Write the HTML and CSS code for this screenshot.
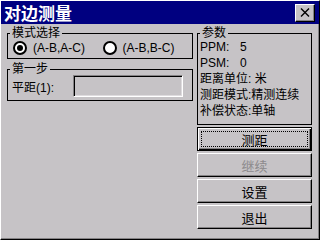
FILE: index.html
```html
<!DOCTYPE html>
<html lang="zh">
<head>
    <meta charset="UTF-8">
    <title>对边测量</title>
    <link rel="stylesheet" href="styles.css">
</head>
<body>
    <div class="dialog">
        <div class="titlebar">
            <span class="title">对边测量</span>
            <span class="close">
                <svg width="10" height="9" viewBox="0 0 10 9"><path d="M1 0.5 L9 8.5 M9 0.5 L1 8.5" stroke="#000" stroke-width="1.4"/></svg>
            </span>
        </div>

        <div class="content">
            <div class="left">
                <fieldset class="group">
                    <legend>模式选择</legend>
                    <div class="radios">
                        <span class="radio"><span class="dot checked"></span>(A-B,A-C)</span>
                        <span class="radio"><span class="dot"></span>(A-B,B-C)</span>
                    </div>
                </fieldset>

                <fieldset class="group step">
                    <legend>第一步</legend>
                    <div class="field-row">
                        <span class="field-label">平距(1):</span>
                        <span class="field"></span>
                    </div>
                </fieldset>
            </div>

            <div class="right">
                <fieldset class="group params">
                    <legend>参数</legend>
                    <div class="lines">
                        <div><span class="key">PPM:</span>5</div>
                        <div><span class="key">PSM:</span>0</div>
                        <div>距离单位: 米</div>
                        <div>测距模式:精测连续</div>
                        <div>补偿状态:单轴</div>
                    </div>
                </fieldset>

                <div class="buttons">
                    <div class="btn focused"><span class="focus">测距</span></div>
                    <div class="btn disabled"><span>继续</span></div>
                    <div class="btn"><span>设置</span></div>
                    <div class="btn"><span>退出</span></div>
                </div>
            </div>
        </div>
    </div>
</body>
</html>
```

FILE: styles.css
```css
body { margin: 0; font-family: "Liberation Sans", "Noto Sans CJK SC", sans-serif; font-size: 12px; color: #000; background: #c6c3c6; }

.dialog { width: 320px; height: 240px; box-sizing: border-box; background: #c6c3c6; border: 1px solid; border-color: #fff #000 #000 #fff; box-shadow: inset -1px -1px #848284; display: flex; flex-direction: column; }

.titlebar { height: 23px; background: #000080; display: flex; align-items: center; justify-content: space-between; padding: 0 4px 0 3px; }
.title { color: #fff; font-weight: bold; font-size: 17px; line-height: 23px; font-family: "Noto Sans CJK SC", sans-serif; }
.close { width: 18px; height: 16px; background: #c6c3c6; border: 1px solid; border-color: #fff #000 #000 #fff; box-shadow: inset -1px -1px #848284; display: flex; align-items: center; justify-content: center; }

.content { display: flex; gap: 4px; padding: 2px 0 0 6px; }
.left { width: 186px; display: flex; flex-direction: column; gap: 3px; }
.right { width: 115px; display: flex; flex-direction: column; }

.group { margin: 0; padding: 0; border: 1px solid #000; min-width: 0; }
.group legend { padding: 0 2px; margin-left: 2px; line-height: 14px; }

.radios { display: flex; align-items: center; padding: 1px 0 3px 5px; height: 14px; }
.radio { width: 93px; display: flex; align-items: center; gap: 6px; line-height: 14px; }
.dot { width: 14px; height: 14px; box-sizing: border-box; border-radius: 50%; border: 2px solid #000; background: #fff; display: flex; align-items: center; justify-content: center; }
.dot.checked::before { content: ""; width: 6px; height: 6px; border-radius: 50%; background: #000; }

.field-row { display: flex; align-items: center; margin-top: -1px; padding: 0 0 3px 4px; }
.field-label { width: 61px; }
.field { width: 110px; height: 22px; box-sizing: border-box; border: 1px solid; border-color: #848284 #fff #fff #848284; box-shadow: inset 1px 1px #000, inset -1px -1px #dedbde; background: #c6c3c6; }

.lines { margin-top: -1px; padding: 0 0 5px 2px; line-height: 16px; }
.key { display: inline-block; width: 40px; }

.buttons { display: flex; flex-direction: column; gap: 2px; margin-top: 2px; }
.btn { height: 24px; box-sizing: border-box; border: 1px solid; border-color: #fff #000 #000 #fff; box-shadow: inset -1px -1px #848284; display: flex; padding: 3px; text-align: center; }
.btn span { flex: 1; display: flex; align-items: center; justify-content: center; font-size: 13px; font-family: "Noto Sans CJK SC", sans-serif; }
.btn.focused { border-color: #000; box-shadow: inset 1px 1px #fff, inset -1px -1px #000, inset -2px -2px #848284; }
.btn .focus { border: 1px dotted #000; }
.btn.disabled span { color: #8c8a8c; }
```
